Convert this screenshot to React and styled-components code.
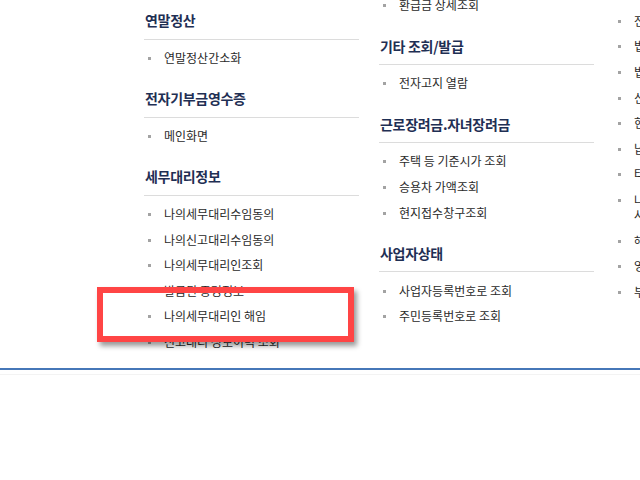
import React from 'react';
import styled, { createGlobalStyle } from 'styled-components';

const GlobalStyle = createGlobalStyle`
  html, body {
    margin: 0;
    padding: 0;
    background: #fff;
  }
  body {
    font-family: "Noto Sans CJK KR", "Noto Sans", sans-serif;
  }
`;

const Page = styled.div`
  position: relative;
  width: 640px;
  height: 480px;
  overflow: hidden;
  background: #fff;
`;

const MenuPanel = styled.div`
  height: 368px;
  overflow: hidden;
  border-bottom: 2px solid #4677b8;
  display: flex;
  align-items: flex-start;
  gap: 20px;
  padding-left: 144px;
`;

const Shade = styled.div`
  margin-top: 4px;
  border-top: 1px solid #f3f3f3;
`;

const Column = styled.div`
  flex: 0 0 215px;
  margin-top: ${(p) => p.$offset}px;
`;

const Heading = styled.h3`
  margin: 18px 0 0 0;
  padding: 0 0 8.5px 1px;
  font-size: 14px;
  line-height: 20px;
  font-weight: 700;
  color: #1f2f54;
  letter-spacing: -0.3px;
  border-bottom: 1px solid #dcdcdc;
`;

const List = styled.ul`
  list-style: none;
  margin: 0;
  padding: 5px 0 0 0;
`;

const Item = styled.li`
  display: flex;
  align-items: flex-start;
  padding: 5.3px 0;
  font-size: 12px;
  line-height: 15px;
  color: #2a2a2a;
  white-space: nowrap;

  &::before {
    content: '';
    flex: 0 0 3px;
    width: 3px;
    height: 3px;
    margin: 7px 13px 0 4px;
    background: #a3a3a3;
  }
`;

const Highlight = styled.div`
  position: absolute;
  left: 97px;
  top: 287px;
  width: 257px;
  height: 55px;
  box-sizing: border-box;
  border: 6px solid #ff4545;
  box-shadow: 3px 4px 5px rgba(0, 0, 0, 0.4);
  pointer-events: none;
`;

const columns = [
  {
    offset: -8,
    groups: [
      { title: '연말정산', items: ['연말정산간소화'] },
      { title: '전자기부금영수증', items: ['메인화면'] },
      {
        title: '세무대리정보',
        items: [
          '나의세무대리수임동의',
          '나의신고대리수임동의',
          '나의세무대리인조회',
          '발급된 증명정보',
          '나의세무대리인 해임',
          '신고대리 정보이력 조회',
        ],
      },
    ],
  },
  {
    offset: -13,
    groups: [
      { items: ['환급금 상세조회'] },
      { title: '기타 조회/발급', items: ['전자고지 열람'] },
      {
        title: '근로장려금.자녀장려금',
        items: ['주택 등 기준시가 조회', '승용차 가액조회', '현지접수창구조회'],
      },
      { title: '사업자상태', items: ['사업자등록번호로 조회', '주민등록번호로 조회'] },
    ],
  },
  {
    offset: -23,
    groups: [
      {
        items: [
          '세금 신고내역 조회',
          '전자신고 결과조회',
          '법인세 중간예납 조회',
          '법정신고기한 안내',
          '신고서 작성내역 조회',
          '현금영수증 조회',
          '납부내역 조회',
          '타인명의 도용 신고',
          ['나의 주택임대소득 신고도움', '사업자 현황 조회'],
          '해외금융계좌 신고',
          '영세율 조기환급 조회',
          '부가가치세 예정고지',
        ],
      },
    ],
  },
];

const App = () => (
  <Page>
    <GlobalStyle />
    <MenuPanel>
      {columns.map((col, ci) => (
        <Column key={ci} $offset={col.offset}>
          {col.groups.map((group, gi) => (
            <div key={gi}>
              {group.title && <Heading>{group.title}</Heading>}
              <List>
                {group.items.map((item, ii) => (
                  <Item key={ii}>
                    <span>
                      {Array.isArray(item) ? (
                        <>
                          {item[0]}
                          <br />
                          {item[1]}
                        </>
                      ) : (
                        item
                      )}
                    </span>
                  </Item>
                ))}
              </List>
            </div>
          ))}
        </Column>
      ))}
    </MenuPanel>
    <Shade />
    <Highlight />
  </Page>
);

export default App;
